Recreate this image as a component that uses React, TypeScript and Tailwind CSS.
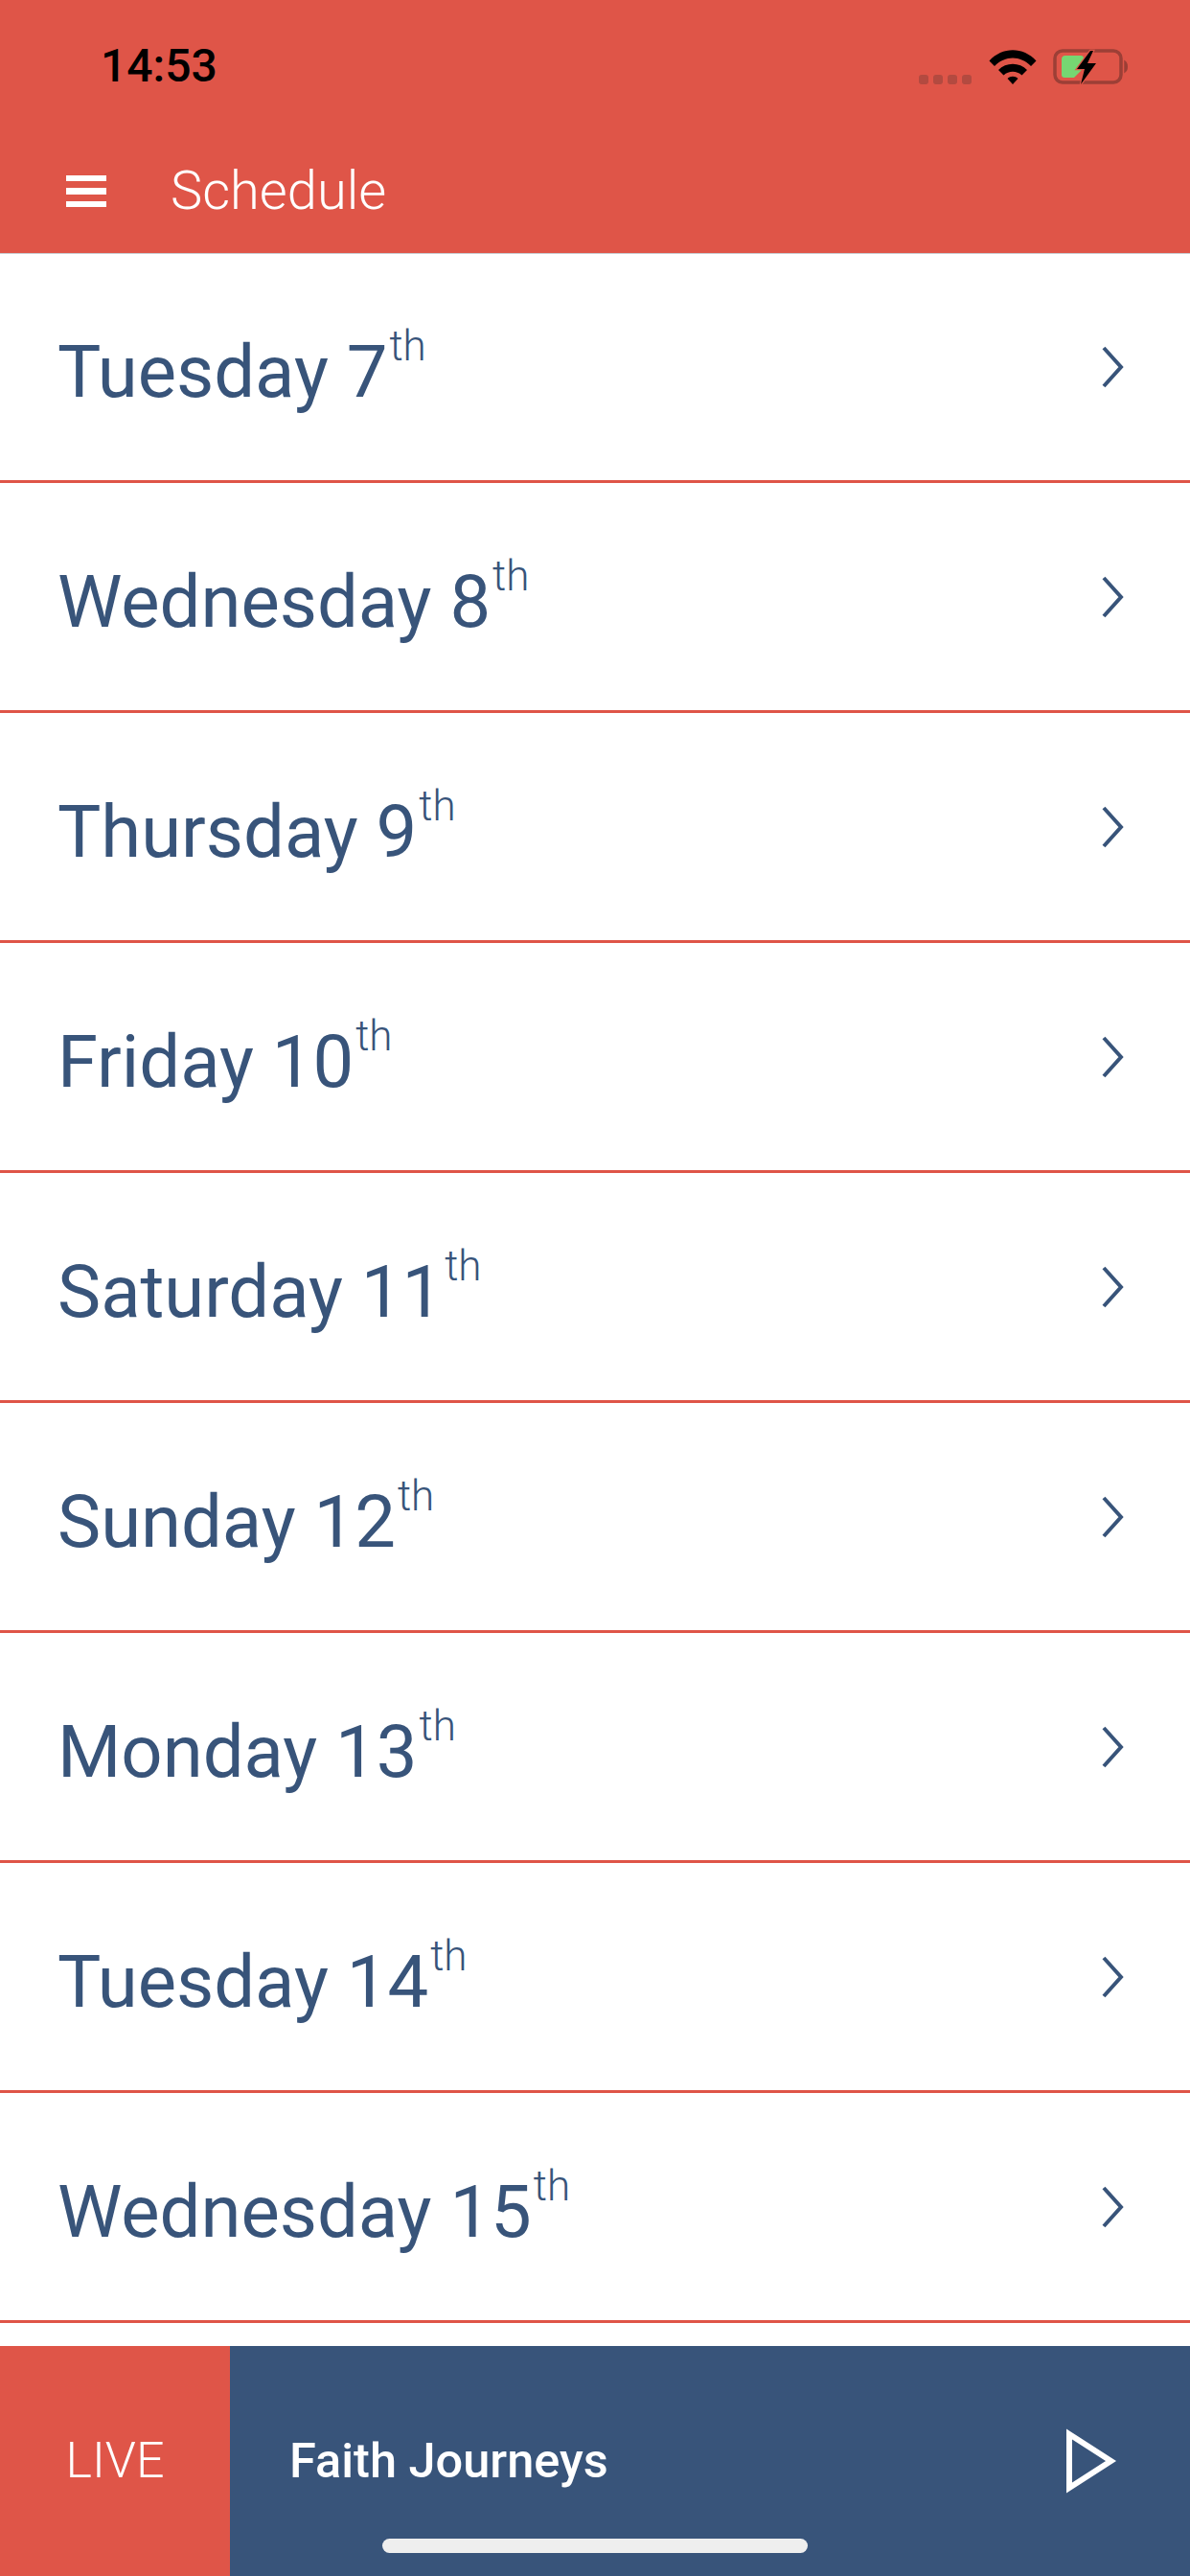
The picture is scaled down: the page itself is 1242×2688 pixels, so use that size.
const days = [
  { label: 'Tuesday 7', suffix: 'th' },
  { label: 'Wednesday 8', suffix: 'th' },
  { label: 'Thursday 9', suffix: 'th' },
  { label: 'Friday 10', suffix: 'th' },
  { label: 'Saturday 11', suffix: 'th' },
  { label: 'Sunday 12', suffix: 'th' },
  { label: 'Monday 13', suffix: 'th' },
  { label: 'Tuesday 14', suffix: 'th' },
  { label: 'Wednesday 15', suffix: 'th' },
];

function StatusIcons() {
  return (
    <div className="mb-[5px] flex items-end">
      <div className="flex gap-[5px]">
        {[0, 1, 2, 3].map((dot) => (
          <div key={dot} className="h-[10px] w-[10px] rounded-[3px] bg-[#b34a40]" />
        ))}
      </div>
      <svg width="50" height="36" viewBox="0 0 50 36" className="ml-[18px]">
        <path d="M0.5 11.5 C14 -3.5 36 -3.5 49.5 11.5 L44 17 C33 5.5 17 5.5 6 17 Z" fill="#000" />
        <path d="M10 21 C18 12.5 32 12.5 40 21 L34.5 26.5 C29 21.5 21 21.5 15.5 26.5 Z" fill="#000" />
        <path d="M19.5 30 C22.5 27 27.5 27 30.5 30 L25 36 Z" fill="#000" />
      </svg>
      <svg width="80" height="38" viewBox="0 0 80 38" className="ml-[17px] mb-[-1px]">
        <rect x="2" y="2" width="69" height="33" rx="8" fill="none" stroke="#9c3f36" strokeWidth="3.5" />
        <path d="M75 13 C78 15 78 22 75 24 Z" fill="#9c3f36" stroke="#9c3f36" strokeWidth="1.5" />
        <path d="M9 11 Q9 7 13 7 H29 Q32 7 32 10 V20 L22 30 H12 Q9 30 9 27 Z" fill="#76d672" />
        <path d="M39 2 L25 21 H33 L29 37 L45 15 H36 L42 2 Z" fill="#000" stroke="#df5548" strokeWidth="2.5" paintOrder="stroke" />
      </svg>
    </div>
  );
}

function DayRow({ label, suffix }: { label: string; suffix: string }) {
  return (
    <div className="flex h-[240px] items-center justify-between border-b-[3px] border-[#df5548] pl-[60px] pr-[69px]">
      <div className="font-['Roboto',sans-serif] text-[76px] font-normal leading-none text-[#38547a]">
        {label}
        <span className="ml-[2px] align-[38px] text-[44px] font-light">{suffix}</span>
      </div>
      <svg width="24" height="46" viewBox="0 0 24 46" fill="none" stroke="#38547a" strokeWidth="4">
        <path d="M3 3 L21 23 L3 43" />
      </svg>
    </div>
  );
}

export default function App() {
  return (
    <div className="relative flex h-[2688px] w-[1242px] flex-col overflow-hidden bg-white font-['Roboto',sans-serif]">
      <header className="relative z-10 h-[264px] bg-[#df5548] shadow-[0_1px_0_#c9cbd0]">
        <div className="flex h-[137px] items-end justify-between pl-[105px] pr-[63px] pb-[44px]">
          <span className="text-[48px] font-medium leading-none text-black">14:53</span>
          <StatusIcons />
        </div>
        <div className="flex items-center pl-[69px] pt-[34px]">
          <div className="flex w-[42px] flex-col gap-[7px]">
            <div className="h-[6px] bg-white" />
            <div className="h-[7px] bg-white" />
            <div className="h-[6px] bg-white" />
          </div>
          <span className="ml-[67px] text-[56px] font-light leading-none text-white">Schedule</span>
        </div>
      </header>

      <div className="flex flex-col">
        {days.map((day) => (
          <DayRow key={day.label} label={day.label} suffix={day.suffix} />
        ))}
      </div>

      <div className="mt-[24px] flex h-[240px]">
        <div className="flex w-[240px] items-center justify-center bg-[#df5548] text-[52px] font-light leading-none text-white">
          LIVE
        </div>
        <div className="flex flex-1 items-center justify-between bg-[#38547a] pl-[62px] pr-[75px]">
          <span className="text-[50.5px] font-medium leading-none text-white">Faith Journeys</span>
          <svg width="54" height="68" viewBox="0 0 54 68">
            <path d="M3 6 L46.5 34 L3 62 Z" fill="none" stroke="#fff" strokeWidth="6" />
          </svg>
        </div>
      </div>

      <div className="absolute bottom-[24px] left-[399px] h-[15px] w-[444px] rounded-full bg-[#eeeeee]" />
    </div>
  );
}
